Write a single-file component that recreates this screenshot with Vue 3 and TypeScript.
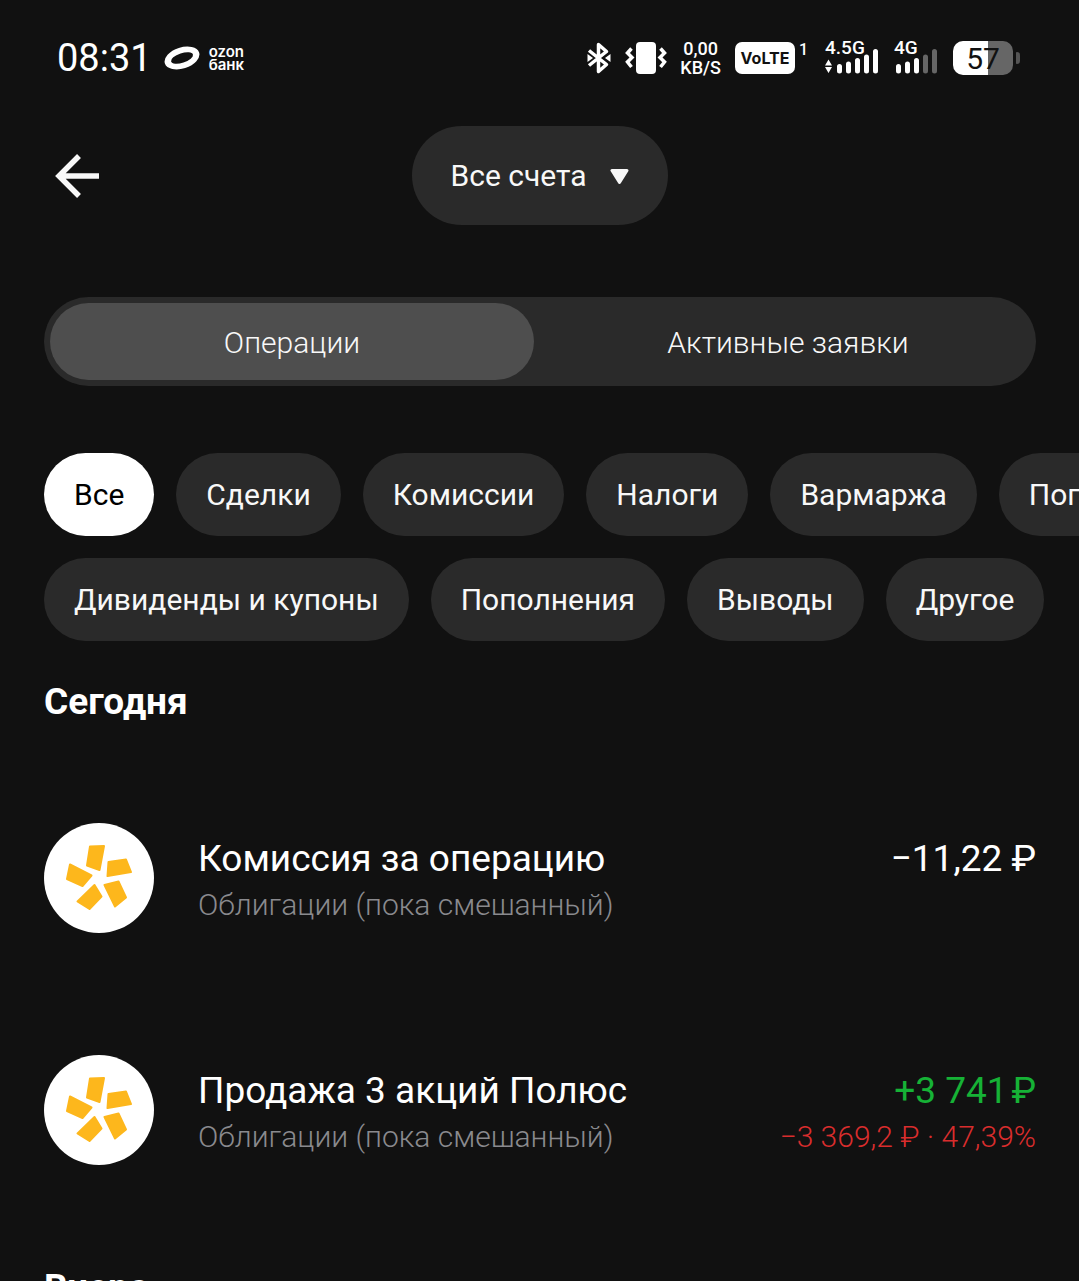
<script setup lang="ts">
import { ref } from 'vue'

interface Operation {
  title: string
  account: string
  amount: string
  positive?: boolean
  result?: string
}

const tabs: string[] = ['Операции', 'Активные заявки']
const activeTab = ref<string>('Операции')

const filterRows: string[][] = [
  ['Все', 'Сделки', 'Комиссии', 'Налоги', 'Вармаржа', 'Погашения'],
  ['Дивиденды и купоны', 'Пополнения', 'Выводы', 'Другое'],
]
const activeFilter = ref<string>('Все')

const today: Operation[] = [
  { title: 'Комиссия за операцию', account: 'Облигации (пока смешанный)', amount: '−11,22 ₽' },
  {
    title: 'Продажа 3 акций Полюс',
    account: 'Облигации (пока смешанный)',
    amount: '+3 741\u200a₽',
    positive: true,
    result: '−3 369,2 ₽ · 47,39%',
  },
]
</script>

<template>
  <div class="screen">
    <div class="status">
      <div class="status-left">
        <time class="clock">08:31</time>
        <svg class="ozon" viewBox="0 0 36 26" aria-hidden="true">
          <g transform="rotate(-18 18 13)">
            <ellipse cx="18" cy="13" rx="18" ry="10.500" fill="#fff" />
            <ellipse cx="18" cy="13" rx="11.500" ry="4.700" fill="#111" />
          </g>
        </svg>
        <span class="ozon-name">ozon<br>банк</span>
      </div>
      <div class="status-right">
        <svg class="bluetooth" viewBox="0 0 24 32" aria-hidden="true">
          <path fill="none" stroke="#fff" stroke-width="3.500" stroke-linejoin="round" d="M2 8.500L19.500 22.500L11.500 29.500V2.500L19.500 9.500L2 23.500" />
          <path fill="#fff" d="M18 16l5.500-4v8zM6 16l-5.500-4v8z" />
        </svg>
        <svg class="vibrate" viewBox="0 0 42 34" aria-hidden="true">
          <rect x="11" y="1" width="20" height="32" rx="4" fill="#fff" />
          <path fill="none" stroke="#fff" stroke-width="3.500" d="M6.500 7.500L2.500 12L7 16.500L2.500 21L6.500 26M35.500 7.500L39.500 12L35 16.500L39.500 21L35.500 26" />
        </svg>
        <span class="speed">0,00<br>KB/S</span>
        <span class="volte">VoLTE</span>
        <span class="sim">1</span>
        <span class="signal">
          <span class="net">4.5G</span>
          <svg class="bars" viewBox="0 0 54 26" aria-hidden="true">
            <path fill="#fff" d="M3.500 11.500l3.500 6H0zM3.500 25l3.500-6H0z" />
            <path stroke="#fff" stroke-width="5" stroke-linecap="round" d="M14.500 18.500V23M23.500 16V23M32.500 12.500V23M41.500 9V23M50.500 3.500V23" />
          </svg>
        </span>
        <span class="signal">
          <span class="net">4G</span>
          <svg class="bars" viewBox="0 0 44 26" aria-hidden="true">
            <path stroke="#fff" stroke-width="5" stroke-linecap="round" d="M4.500 18.500V23M13.500 16V23M22.500 12.500V23" />
            <path stroke="#666" stroke-width="5" stroke-linecap="round" d="M31.500 9V23M40.500 3.500V23" />
          </svg>
        </span>
        <span class="battery">57</span>
        <span class="battery-tip"></span>
      </div>
    </div>

    <header class="header">
      <button class="back" type="button" aria-label="Назад">
        <svg viewBox="0 0 44 44" aria-hidden="true">
          <path fill="none" stroke="#f8f8f8" stroke-width="5.500" d="M44 22H4M24 2L4 22L24 42" />
        </svg>
      </button>
      <button class="accounts" type="button">
        Все счета
        <svg viewBox="0 0 20 18" aria-hidden="true">
          <path fill="#f8f8f8" stroke="#f8f8f8" stroke-width="3" stroke-linejoin="round" d="M2 3.500H17L9.500 15.500Z" />
        </svg>
      </button>
    </header>

    <nav class="tabs">
      <button
        v-for="tab in tabs"
        :key="tab"
        type="button"
        class="tab"
        :class="{ active: tab === activeTab }"
        @click="activeTab = tab"
      >{{ tab }}</button>
    </nav>

    <div class="filters">
      <div v-for="(row, i) in filterRows" :key="i" class="filter-row">
        <button
          v-for="name in row"
          :key="name"
          type="button"
          class="chip"
          :class="{ active: name === activeFilter }"
          @click="activeFilter = name"
        >{{ name }}</button>
      </div>
    </div>

    <main class="history">
      <h2>Сегодня</h2>
      <ul>
        <li v-for="op in today" :key="op.title" class="operation">
          <svg class="logo" viewBox="0 0 110 110" aria-hidden="true">
            <circle cx="55" cy="55" r="55" fill="#fff" />
            <path
              fill="#fdb71c"
              stroke="#fdb71c"
              stroke-width="2"
              stroke-linejoin="round"
              d="M46 23.500L60 23L55.500 47L43 42.500ZM64.500 39L82 36.500L87 49L63.500 53ZM60.500 62L74.500 58.500L82 74.500L71 83.500ZM50.500 62L57.500 73.500L45.500 86L33.500 78.500ZM26 41.500L47.500 52.500L38.500 63L23 56Z"
            />
          </svg>
          <div class="info">
            <span class="title">{{ op.title }}</span>
            <span class="sub">{{ op.account }}</span>
          </div>
          <div class="sum">
            <span class="title" :class="{ positive: op.positive }">{{ op.amount }}</span>
            <span v-if="op.result" class="sub loss">{{ op.result }}</span>
          </div>
        </li>
      </ul>
      <h2>Вчера</h2>
    </main>
  </div>
</template>

<style>
body {
  background: #111;
}
</style>

<style scoped>
.screen {
  height: 100vh;
  overflow: hidden;
  background: #111;
  color: #fff;
  font-family: Roboto, "Noto Sans", sans-serif;
}

button {
  border: 0;
  padding: 0;
  background: none;
  color: #f8f8f8;
  font: inherit;
  cursor: pointer;
}

svg {
  display: block;
  flex: none;
}

.status {
  display: flex;
  justify-content: space-between;
  align-items: center;
  height: 116px;
  padding: 0 59px 0 57px;
}

.status-left,
.status-right {
  display: flex;
  align-items: center;
}

.clock {
  margin-right: 12px;
  font-size: 38px;
  line-height: 48px;
}

.ozon {
  width: 36px;
  height: 26px;
  margin-right: 9px;
}

.ozon-name {
  font: 600 15px/13px Inter, sans-serif;
}

.bluetooth {
  width: 24px;
  height: 32px;
  margin-right: 14px;
}

.vibrate {
  width: 42px;
  height: 34px;
  margin-right: 13px;
}

.speed {
  margin-right: 14px;
  font-size: 18px;
  font-weight: 500;
  line-height: 19px;
  text-align: center;
}

.volte {
  width: 60px;
  border-radius: 7px;
  background: #fff;
  color: #111;
  font: 700 16px/32px Inter, sans-serif;
  text-align: center;
}

.sim {
  align-self: flex-start;
  width: 30px;
  padding: 3px 0 0 4px;
  box-sizing: border-box;
  font-size: 16px;
  font-weight: 500;
  line-height: 16px;
}

.signal {
  position: relative;
  display: flex;
  align-items: flex-end;
  height: 32px;
  margin-right: 15px;
}

.net {
  position: absolute;
  top: -3px;
  left: 0;
  font-size: 19px;
  font-weight: 500;
  line-height: 18px;
}

.bars {
  height: 26px;
}

.battery {
  width: 60px;
  padding-top: 2px;
  border-radius: 10px;
  background: linear-gradient(90deg, #fff 35px, #666 35px);
  color: #111;
  font-size: 30px;
  line-height: 32px;
  text-align: center;
}

.battery-tip {
  width: 4px;
  height: 12px;
  margin-left: 3px;
  border-radius: 1px 4px 4px 1px;
  background: #555;
}

.header {
  display: grid;
  grid-template-columns: 1fr auto 1fr;
  align-items: center;
  padding: 10px 43px 0 44px;
}

.back {
  justify-self: start;
  padding: 11px;
}

.back svg {
  width: 44px;
  height: 44px;
}

.accounts {
  display: flex;
  align-items: center;
  gap: 23px;
  height: 99px;
  padding: 0 38px;
  border-radius: 50px;
  background: #2a2a2a;
  font-size: 30px;
}

.accounts svg {
  width: 20px;
  height: 18px;
}

.tabs {
  display: flex;
  gap: 12px;
  margin: 72px 43px 0 44px;
  padding: 6px;
  border-radius: 45px;
  background: #2a2a2a;
}

.tab {
  flex: 1;
  height: 77px;
  padding-top: 2px;
  border-radius: 39px;
  font-size: 30px;
  font-weight: 300;
}

.tab.active {
  background: #4e4e4e;
}

.filters {
  display: flex;
  flex-direction: column;
  gap: 22px;
  padding: 67px 0 0 44px;
}

.filter-row {
  display: flex;
  gap: 22px;
  overflow: hidden;
}

.chip {
  flex: none;
  height: 83px;
  padding: 0 30px;
  border-radius: 42px;
  background: #2a2a2a;
  font-size: 30px;
}

.chip.active {
  background: #fff;
  color: #000;
}

.history {
  padding: 37px 43px 0 44px;
}

h2 {
  margin: 0;
  font-size: 37px;
  font-weight: 700;
  line-height: 48px;
}

ul {
  margin: 0;
  padding: 36px 0 38px;
  list-style: none;
}

.operation {
  display: flex;
  gap: 44px;
  height: 232px;
  align-items: center;
}

.logo {
  width: 110px;
  height: 110px;
}

.info,
.sum {
  display: flex;
  flex-direction: column;
  height: 90px;
}

.info {
  flex: 1;
}

.sum {
  align-items: flex-end;
}

.title {
  font-size: 37px;
  line-height: 52px;
}

.sub {
  color: #8a8a8e;
  font-size: 30px;
  font-weight: 300;
  line-height: 40px;
}

.positive {
  color: #16b236;
}

.loss {
  color: #d92d2d;
}
</style>
